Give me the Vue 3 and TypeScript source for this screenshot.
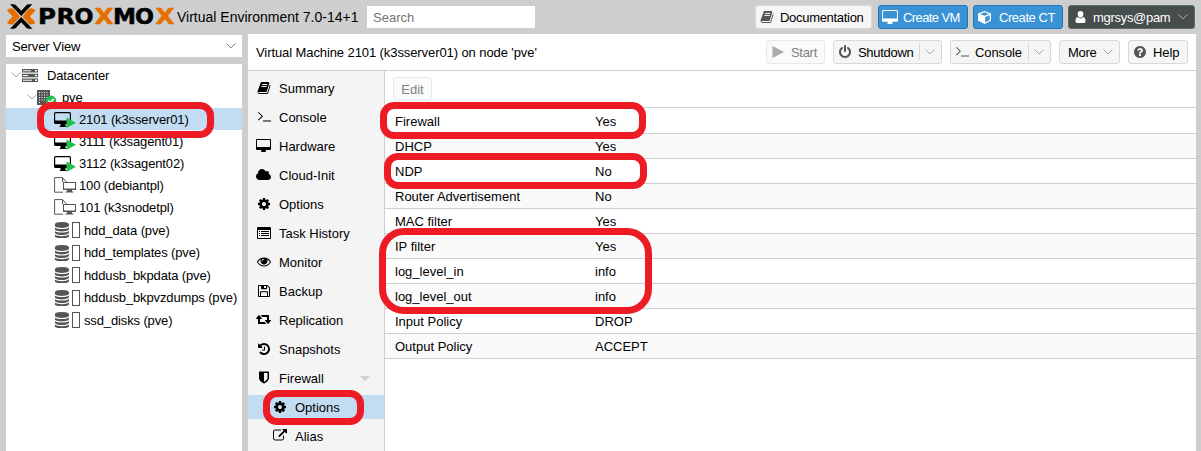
<script setup lang="ts">
interface IconDef { box: string; d: string }
interface TreeRow { label: string; kind: string; selected?: boolean }
interface NavItem { label: string; icon: string; sub?: boolean; selected?: boolean; arrow?: boolean }

const icons: Record<string, IconDef> = {
  desktop: { box: '0 0 1920 1792', d: 'M1792 992v-832q0-13-9.5-22.5t-22.5-9.5h-1600q-13 0-22.5 9.5t-9.5 22.5v832q0 13 9.5 22.5t22.5 9.5h1600q13 0 22.5-9.5t9.5-22.5zm128-832v1088q0 66-47 113t-113 47h-544q0 37 16 77.5t32 71 16 43.5q0 26-19 45t-45 19h-512q-26 0-45-19t-19-45q0-14 16-44t32-70 16-78h-544q-66 0-113-47t-47-113v-1088q0-66 47-113t113-47h1600q66 0 113 47t47 113z' },
  cog: { box: '0 0 1792 1792', d: 'M1152 896q0-106-75-181t-181-75-181 75-75 181 75 181 181 75 181-75 75-181zm512-109v222q0 12-8 23t-20 13l-185 28q-19 54-39 91 35 50 107 138 10 12 10 25t-9 23q-27 37-99 108t-94 71q-12 0-26-9l-138-108q-44 23-91 38-16 136-29 186-7 28-36 28h-222q-14 0-24.5-8.5t-11.5-21.5l-28-184q-49-16-90-37l-141 107q-10 9-25 9-14 0-25-11-126-114-165-168-7-10-7-23 0-12 8-23 15-21 51-66.5t54-70.5q-27-50-41-99l-183-27q-13-2-21-12.5t-8-23.5v-222q0-12 8-23t19-13l186-28q14-46 39-92-40-57-107-138-10-12-10-24 0-10 9-23 26-36 98.5-107.5t94.5-71.5q13 0 26 10l138 107q44-23 91-38 16-136 29-186 7-28 36-28h222q14 0 24.5 8.5t11.5 21.5l28 184q49 16 90 37l142-107q9-9 24-9 13 0 25 10 129 119 165 170 7 8 7 22 0 12-8 23-15 21-51 66.5t-54 70.5q26 50 41 98l183 28q13 2 21 12.5t8 23.5z' },
  database: { box: '128 0 1536 1792', d: 'M896 768q237 0 443-43t325-127v170q0 69-103 128t-280 93.5-385 34.5-385-34.5-280-93.5-103-128v-170q119 84 325 127t443 43zm0 768q237 0 443-43t325-127v170q0 69-103 128t-280 93.5-385 34.5-385-34.5-280-93.5-103-128v-170q119 84 325 127t443 43zm0-384q237 0 443-43t325-127v170q0 69-103 128t-280 93.5-385 34.5-385-34.5-280-93.5-103-128v-170q119 84 325 127t443 43zm0-1152q208 0 385 34.5t280 93.5 103 128v128q0 69-103 128t-280 93.5-385 34.5-385-34.5-280-93.5-103-128v-128q0-69 103-128t280-93.5 385-34.5z' },
  history: { box: '0 0 1792 1792', d: 'M1664 896q0 156-61 298t-164 245-245 164-298 61q-172 0-327-72.5t-264-204.5q-7-10-6.5-22.5t8.5-20.5l137-138q10-9 25-9 16 2 23 12 73 95 179 147t225 52q104 0 198.5-40.5t163.5-109.5 109.5-163.5 40.5-198.5-40.5-198.5-109.5-163.5-163.5-109.5-198.5-40.5q-98 0-188 35.5t-160 101.5l137 138q31 30 14 69-17 40-59 40h-448q-26 0-45-19t-19-45v-448q0-42 40-59 39-17 69 14l130 129q107-101 244.5-156.5t284.5-55.5q156 0 298 61t245 164 164 245 61 298zm-640-288v448q0 14-9 23t-23 9h-320q-14 0-23-9t-9-23v-64q0-14 9-23t23-9h224v-352q0-14 9-23t23-9h64q14 0 23 9t9 23z' },
  cloud: { box: '64 0 1920 1792', d: 'M1984 1152q0 159-112.5 271.5t-271.5 112.5h-1088q-185 0-316.5-131.5t-131.5-316.5q0-132 71-241.5t187-163.5q-2-28-2-43 0-212 150-362t362-150q158 0 286.5 88t187.5 230q70-62 166-62 106 0 181 75t75 181q0 75-41 138 129 30 213 134.5t84 239.5z' },
  power: { box: '128 0 1536 1792', d: 'M1664 896q0 156-61 298t-164 245-245 164-298 61-298-61-245-164-164-245-61-298q0-182 80.5-343t226.5-270q43-32 95.5-25t83.5 50q32 42 24.5 94.5t-49.5 84.5q-98 74-151.5 181t-53.5 228q0 104 40.5 198.5t109.5 163.5 163.5 109.5 198.5 40.5 198.5-40.5 163.5-109.5 109.5-163.5 40.5-198.5q0-121-53.5-228t-151.5-181q-42-32-49.5-84.5t24.5-94.5q31-43 84-50t95 25q146 109 226.5 270t80.5 343zm-640-768v640q0 52-38 90t-90 38-90-38-38-90v-640q0-52 38-90t90-38 90 38 38 90z' },
  help: { box: '128 0 1536 1792', d: 'M1024 1376v-192q0-14-9-23t-23-9h-192q-14 0-23 9t-9 23v192q0 14 9 23t23 9h192q14 0 23-9t9-23zm256-672q0-88-55.5-163t-138.5-116-170-41q-243 0-371 213-15 24 8 42l132 100q7 6 19 6 16 0 25-12 53-68 86-92 34-24 86-24 48 0 85.5 26t37.5 59q0 38-20 61t-68 45q-63 28-115.5 86.5t-52.5 125.5v36q0 14 9 23t23 9h192q14 0 23-9t9-23q0-19 21.5-49.5t54.5-49.5q32-18 49-28.5t46-35 44.5-48 28-60.5 12.5-81zm384 192q0 209-103 385.5t-279.5 279.5-385.5 103-385.5-103-279.5-279.5-103-385.5 103-385.5 279.5-279.5 385.5-103 385.5 103 279.5 279.5 103 385.5z' },
  eye: { box: '0 64 1792 1792', d: 'M1664 960q-152-236-381-353 61 104 61 225 0 185-131.5 316.5t-316.5 131.5-316.5-131.5-131.5-316.5q0-121 61-225-229 117-381 353 133 205 333.5 326.5t434.5 121.5 434.5-121.5 333.5-326.5zm-720-384q0-20-14-34t-34-14q-125 0-214.5 89.5t-89.5 214.5q0 20 14 34t34 14 34-14 14-34q0-86 61-147t147-61q20 0 34-14t14-34zm848 384q0 34-20 69-140 230-376.5 368.5t-499.5 138.5-499.5-139-376.5-368q-20-35-20-69t20-69q140-229 376.5-368t499.5-139 499.5 139 376.5 368q20 35 20 69z' },
  retweet: { box: '0 128 1920 1792', d: 'M1280 1504q0 13-9.5 22.5t-22.5 9.5h-960q-8 0-13.5-2t-9-7-5.5-8-3-11.5-1-11.5v-600h-192q-26 0-45-19t-19-45q0-24 15-41l320-384q19-22 49-22t49 22l320 384q15 17 15 41 0 26-19 45t-45 19h-192v384h576q16 0 25 11l160 192q7 10 7 21zm640-416q0 24-15 41l-320 384q-20 23-49 23t-49-23l-320-384q-15-17-15-41 0-26 19-45t45-19h192v-384h-576q-16 0-25-12l-160-192q-7-9-7-20 0-13 9.5-22.5t22.5-9.5h960q8 0 13.5 2t9 7 5.5 8 3 11.5 1 11.5v600h192q26 0 45 19t19 45z' },
  book: { box: '0 0 1792 1792', d: 'M1703 478q40 57 18 129l-275 906q-19 64-76.5 107.5t-122.5 43.5h-923q-77 0-148.5-53.5t-99.5-131.5q-24-67-2-127 0-4 3-27t4-37q1-8-3-21.5t-3-19.5q2-11 8-21t16.5-23.5 16.5-23.5q23-38 45-91.5t30-91.5q3-10 .5-30t-.5-28q3-11 17-28t17-23q21-36 42-92t25-90q1-9-2.500-32t.5-28q4-13 22-30.500t22-22.500q19-26 42.500-84.500t27.500-96.500q1-8-3-25.500t-2-26.500q2-8 9-18t18-23 17-21q8-12 16.500-30.500t15-35 16-36 19.500-32 26.500-23.500 36-11.500 47.500 5.500l-1 3q38-9 51-9h761q74 0 114 56t18 130l-274 906q-36 119-71.500 153.500t-128.500 34.500h-869q-27 0-38 15-11 16-1 43 24 70 144 70h923q29 0 56-15.500t35-41.500l300-987q7-22 5-57 38 15 59 43zm-1064 2q-4 13 2 22.500t20 9.500h608q13 0 25.500-9.500t16.500-22.500l21-64q4-13-2-22.500t-20-9.500h-608q-13 0-25.500 9.500t-16.500 22.500zm-83 256q-4 13 2 22.500t20 9.500h608q13 0 25.500-9.500t16.500-22.500l21-64q4-13-2-22.500t-20-9.500h-608q-13 0-25.500 9.500t-16.500 22.500z' },
  shield: { box: '0 64 1792 1792', d: 'M1344 960v-640h-448v1137q119-63 213-137 235-184 235-360zm192-768v768q0 86-33.5 170.5t-83 150-118 127.5-126.5 103-121 77.5-89.5 49.5-42.5 20q-12 6-26 6t-26-6q-16-7-42.5-20t-89.5-49.5-121-77.5-126.5-103-118-127.5-83-150-33.5-170.5v-768q0-26 19-45t45-19h1152q26 0 45 19t19 45z' },
  external: { box: '0 64 1792 1792', d: 'M1408 928v320q0 119-84.5 203.5t-203.5 84.5h-832q-119 0-203.5-84.5t-84.5-203.5v-832q0-119 84.5-203.5t203.5-84.5h704q14 0 23 9t9 23v64q0 14-9 23t-23 9h-704q-66 0-113 47t-47 113v832q0 66 47 113t113 47h832q66 0 113-47t47-113v-320q0-14 9-23t23-9h64q14 0 23 9t9 23zm384-864v512q0 26-19 45t-45 19-45-19l-176-176-652 652q-10 10-23 10t-23-10l-114-114q-10-10-10-23t10-23l652-652-176-176q-19-19-19-45t19-45 45-19h512q26 0 45 19t19 45z' },
  terminal: { box: '0 0 14 14', d: 'M1 2.6L1.7 1.9 6 6.2 1.7 10.5 1 9.8 4.6 6.2zM6 10.4h8v1.1H6z' },
  list: { box: '0 0 14 14', d: 'M1 1h12q1 0 1 1v10q0 1-1 1H1q-1 0-1-1V2q0-1 1-1zM1 4v8h12V4zM2 5h1v1H2zM4 5h8v1H4zM2 7h1v1H2zM4 7h8v1H4zM2 9h1v1H2zM4 9h8v1H4z' },
  floppy: { box: '0 0 14 14', d: 'M2 1h8.4L13 3.6V12q0 1-1 1H2q-1 0-1-1V2q0-1 1-1zM2 2v10h1V8q0-.8.8-.8h6.4q.8 0 .8.8v4h1V4l-2-2v2.5q0 .7-.8.7H4.8Q4 5.200 4 4.500V2zM7 2v2h2V2zM4 8.200V12h6V8.200z' },
  user: { box: '0 0 10 12', d: 'M5 0C6.800 0 7.900 1.300 7.900 3.100S6.800 6.700 5 6.700 2.100 4.900 2.100 3.100 3.200 0 5 0zM2.400 6Q3.500 7.400 5 7.400T7.600 6C9.400 6.200 10 8 10 10.300Q10 12 8.600 12H1.400Q0 12 0 10.300C0 8 .6 6.200 2.400 6z' },
  cube: { box: '0 0 13 13', d: 'M6.500 0L13 2.500V9.800L6.500 13 0 9.800V2.500zM6.500 1.300L2 3 6.500 4.700 11 3zM7.200 11.200L11.700 9V4.200L7.200 5.900z' },
  play: { box: '0 0 12 12', d: 'M.5 0L12 6 .5 12z' },
}

const tree: TreeRow[] = [
  { label: 'Datacenter', kind: 'dc' },
  { label: 'pve', kind: 'node' },
  { label: '2101 (k3sserver01)', kind: 'guest', selected: true },
  { label: '3111 (k3sagent01)', kind: 'guest' },
  { label: '3112 (k3sagent02)', kind: 'guest' },
  { label: '100 (debiantpl)', kind: 'tpl' },
  { label: '101 (k3snodetpl)', kind: 'tpl' },
  { label: 'hdd_data (pve)', kind: 'store' },
  { label: 'hdd_templates (pve)', kind: 'store' },
  { label: 'hddusb_bkpdata (pve)', kind: 'store' },
  { label: 'hddusb_bkpvzdumps (pve)', kind: 'store' },
  { label: 'ssd_disks (pve)', kind: 'store' },
]

const nav: NavItem[] = [
  { label: 'Summary', icon: 'book' },
  { label: 'Console', icon: 'terminal' },
  { label: 'Hardware', icon: 'desktop' },
  { label: 'Cloud-Init', icon: 'cloud' },
  { label: 'Options', icon: 'cog' },
  { label: 'Task History', icon: 'list' },
  { label: 'Monitor', icon: 'eye' },
  { label: 'Backup', icon: 'floppy' },
  { label: 'Replication', icon: 'retweet' },
  { label: 'Snapshots', icon: 'history' },
  { label: 'Firewall', icon: 'shield', arrow: true },
  { label: 'Options', icon: 'cog', sub: true, selected: true },
  { label: 'Alias', icon: 'external', sub: true },
]

const globalButtons = [
  { id: 'docs', label: 'Documentation', icon: 'book' },
  { id: 'vm', label: 'Create VM', icon: 'desktop' },
  { id: 'ct', label: 'Create CT', icon: 'cube' },
  { id: 'user', label: 'mgrsys@pam', icon: 'user', chevron: true },
]

const vmButtons = [
  { id: 'start', label: 'Start', icon: 'play' },
  { id: 'shutdown', label: 'Shutdown', icon: 'power', chevron: true, split: true },
  { id: 'console', label: 'Console', icon: 'terminal', chevron: true, split: true },
  { id: 'more', label: 'More', icon: '', chevron: true },
  { id: 'help', label: 'Help', icon: 'help' },
]

const options: [string, string][] = [
  ['Firewall', 'Yes'],
  ['DHCP', 'Yes'],
  ['NDP', 'No'],
  ['Router Advertisement', 'No'],
  ['MAC filter', 'Yes'],
  ['IP filter', 'Yes'],
  ['log_level_in', 'info'],
  ['log_level_out', 'info'],
  ['Input Policy', 'DROP'],
  ['Output Policy', 'ACCEPT'],
]
</script>

<template>
  <div class="app">
    <header class="top">
      <svg class="logo" width="170" height="30" viewBox="0 0 170 30">
        <path fill="#e57000" d="M0 9.500Q1.500 7.500 3.500 7.500H6L13 15.500 6 23.500H3.500Q1.500 23.500 0 21.500L5.500 15.500zM28.400 9.500Q26.900 7.500 24.900 7.500H22.400L15.400 15.500 22.400 23.500H24.900Q26.900 23.500 28.400 21.500L22.900 15.500z" />
        <path fill="#000" d="M3 3.300H6.500Q8 3.300 9 4.300L14.200 9.800 19.400 4.300Q20.400 3.300 21.900 3.300H25.400L14.200 15zM3 27.700H6.500Q8 27.700 9 26.700L14.200 21.200 19.400 26.700Q20.400 27.700 21.900 27.700H25.400L14.200 16z" />
        <g class="wordmark">
          <text x="31" y="23.300" textLength="18" lengthAdjust="spacingAndGlyphs">P</text>
          <text x="49.500" y="23.300" textLength="18.500" lengthAdjust="spacingAndGlyphs">R</text>
          <text x="67.500" y="23.300" textLength="19" lengthAdjust="spacingAndGlyphs">O</text>
          <text class="orange" x="87.500" y="23.300" textLength="19" lengthAdjust="spacingAndGlyphs">X</text>
          <text x="106" y="23.300" textLength="23" lengthAdjust="spacingAndGlyphs">M</text>
          <text x="128" y="23.300" textLength="19" lengthAdjust="spacingAndGlyphs">O</text>
          <text class="orange" x="148.500" y="23.300" textLength="19" lengthAdjust="spacingAndGlyphs">X</text>
        </g>
      </svg>
      <span class="version">Virtual Environment 7.0-14+1</span>
      <div class="search">Search</div>
      <div class="global-buttons">
        <div v-for="b in globalButtons" :key="b.id" class="btn" :class="b.id">
          <svg class="icon" :viewBox="icons[b.icon].box"><path fill-rule="evenodd" :d="icons[b.icon].d" /></svg>
          <span>{{ b.label }}</span>
          <svg v-if="b.chevron" class="chev" viewBox="0 0 10 6"><path d="M.5.5L5 5 9.500.5" /></svg>
        </div>
      </div>
    </header>

    <div class="body">
      <aside class="west">
        <div class="view-select">
          <span>Server View</span>
          <svg class="chev" viewBox="0 0 10 6"><path d="M.5.5L5 5 9.500.5" /></svg>
        </div>
        <div class="tree">
          <div v-for="row in tree" :key="row.label" class="row" :class="[row.kind, { selected: row.selected }]">
            <svg v-if="row.kind === 'dc' || row.kind === 'node'" class="chev" viewBox="0 0 10 6"><path d="M.5.5L5 5 9.500.5" /></svg>
            <svg v-if="row.kind === 'dc'" class="tree-icon" width="16" height="13" viewBox="0 0 16 13">
              <path fill="#555" fill-rule="evenodd" d="M0 0h16v3.500H0zM0 4.700h16v3.500H0zM0 9.400h16v3.500H0zM1 1.300v1h8v-1zM1 6v1h5V6zM1 10.700v1h9v-1zM13 1v1.500h2V1zM13 5.700v1.500h2V5.700zM13 10.400v1.500h2v-1.500z" />
            </svg>
            <svg v-else-if="row.kind === 'node'" class="tree-icon" width="20" height="16" viewBox="0 0 20 16">
              <path fill="#555" fill-rule="evenodd" d="M0 0h13v15H0zM2 2v1h1V2zM4.500 2v1h1V2zM7 2v1h1V2zM9.500 2v1h1V2zM2 4.500v1h1v-1zM4.500 4.500v1h1v-1zM7 4.500v1h1v-1zM9.500 4.500v1h1v-1zM2 7v1h1V7zM4.500 7v1h1V7zM7 7v1h1V7zM9.500 7v1h1V7zM2 9.500v1h1v-1zM4.500 9.500v1h1v-1zM7 9.500v1h1v-1zM2 12v1h1v-1z" />
              <circle cx="14" cy="10.700" r="5.200" fill="#21bf4b" />
              <path d="M11.300 10.500l2 2 3.400-3.600" fill="none" stroke="#fff" stroke-width="1.600" />
            </svg>
            <svg v-else-if="row.kind === 'guest'" class="tree-icon" width="22" height="16" viewBox="0 0 22 16">
              <path fill="#000" fill-rule="evenodd" d="M1.500 0h14q1.500 0 1.500 1.500v9q0 1.500-1.500 1.500H11.500v2q1 0 1 1H5.500q0-1 1-1v-2h-5Q0 12 0 10.500v-9Q0 0 1.500 0zM1.200 1.200v7.300h14.600V1.200z" />
              <path d="M12.500 5.500L22 10.700 12.500 16z" fill="#21bf4b" />
            </svg>
            <svg v-else-if="row.kind === 'tpl'" class="tree-icon" width="23" height="16" viewBox="0 0 23 16">
              <path d="M9 15.200H.6V.6H8.500L12.500 5M8.500.6V5" fill="none" stroke="#555" />
              <path fill="#555" fill-rule="evenodd" d="M9 5h13v8h-4v1.500h1.500v1h-8v-1H13V13H9zM10 6v5.500h11V6z" />
            </svg>
            <svg v-else class="tree-icon" width="27" height="16" viewBox="0 0 27 16">
              <svg x=".7" width="14.300" height="16.500" preserveAspectRatio="none" :viewBox="icons.database.box"><path fill="#555" :d="icons.database.d" /></svg>
              <rect x="18.500" y=".5" width="7" height="15" fill="none" stroke="#555" />
            </svg>
            <span>{{ row.label }}</span>
          </div>
        </div>
      </aside>

      <main class="center">
        <div class="title-bar">
          <span class="title">Virtual Machine 2101 (k3sserver01) on node 'pve'</span>
          <div class="vm-buttons">
            <div v-for="b in vmButtons" :key="b.id" class="btn" :class="b.id">
              <svg v-if="b.icon" class="icon" :viewBox="icons[b.icon].box"><path fill-rule="evenodd" :d="icons[b.icon].d" /></svg>
              <span>{{ b.label }}</span>
              <i v-if="b.split" class="divider" />
              <svg v-if="b.chevron" class="chev" viewBox="0 0 10 6"><path d="M.5.5L5 5 9.500.5" /></svg>
            </div>
          </div>
        </div>
        <div class="content">
          <nav class="menu">
            <div v-for="(n, i) in nav" :key="i" class="item" :class="{ sub: n.sub, selected: n.selected }">
              <svg class="icon" :class="n.icon" :viewBox="icons[n.icon].box"><path fill-rule="evenodd" :d="icons[n.icon].d" /></svg>
              <span>{{ n.label }}</span>
              <i v-if="n.arrow" class="caret" />
            </div>
          </nav>
          <section class="panel">
            <div class="toolbar"><div class="btn edit">Edit</div></div>
            <div class="grid">
              <div v-for="o in options" :key="o[0]" class="option"><span>{{ o[0] }}</span><span>{{ o[1] }}</span></div>
            </div>
          </section>
        </div>
      </main>
    </div>

    <div class="mark mark-tree" />
    <div class="mark mark-firewall" />
    <div class="mark mark-ndp" />
    <div class="mark mark-filter" />
    <div class="mark mark-options" />
  </div>
</template>

<style>
body { margin: 0; overflow: hidden; }
</style>

<style scoped>
.app { position: relative; width: 1201px; height: 451px; overflow: hidden; background: #cecece; color: #000; font: 13px/17px "Liberation Sans", Arial, sans-serif; display: flex; flex-direction: column; white-space: nowrap; }
svg { display: block; flex: none; }
.top { height: 34px; display: flex; align-items: flex-start; flex: none; }
.logo { margin: 1px 0 0 7px; }
.wordmark { font: bold 21px "DejaVu Sans", sans-serif; stroke: #000; stroke-width: .5; }
.orange { fill: #e57000; stroke: #e57000; }
.version { font-size: 14px; line-height: 18px; margin: 8px 0 0; width: 190px; }
.search { background: #fff; color: #757575; width: 162px; height: 22px; line-height: 23px; padding-left: 6px; margin-top: 6px; }
.global-buttons { margin: 5px 6px 0 auto; display: flex; gap: 5px; }
.btn { box-sizing: border-box; height: 24px; border: 1px solid #d8d8d8; border-radius: 3px; background: #f5f5f5; display: flex; align-items: center; }
.btn span { letter-spacing: -.3px; }
.icon { width: 14px; height: 14px; fill: currentColor; }
.btn .icon { color: #555; }
.chev { width: 10px; height: 6px; fill: none; stroke: #aaa; stroke-width: 1; }
.docs { width: 117px; padding-left: 4px; }
.docs span { margin-left: 6px; }
.vm { width: 90px; padding-left: 3px; margin-left: 1px; }
.vm .icon { width: 16px; height: 15px; }
.btn.vm span { margin-left: 5px; letter-spacing: -.6px; }
.ct { width: 90px; padding-left: 4px; }
.ct .icon { width: 13px; height: 13px; }
.ct span { margin-left: 8px; }
.btn.ct span { letter-spacing: -.45px; }
.vm, .ct { background: #3892d4; border-color: #2376b5; color: #fff; }
.global-buttons .vm .icon, .global-buttons .ct .icon, .global-buttons .user .icon { color: #fff; }
.user { width: 127px; padding-left: 6px; background: #464d4d; border-color: #5c6c68; color: #fff; }
.user .icon { width: 11px; height: 12px; }
.user span { margin-left: 7px; width: 85px; }
.body { flex: 1; display: flex; min-height: 0; }
.west { width: 236px; margin-left: 6px; display: flex; flex-direction: column; }
.view-select { height: 22px; margin-top: 1px; background: #fff; display: flex; align-items: center; justify-content: space-between; padding: 0 6px; letter-spacing: -.15px; }
.view-select .chev { stroke: #888; }
.tree { margin-top: 7px; background: #fff; flex: 1; letter-spacing: -.13px; }
.row { height: 22px; display: flex; align-items: center; box-sizing: border-box; }
.row.dc { padding-left: 5px; }
.row.dc .tree-icon { margin: 0 9px 0 1px; }
.row.node { padding-left: 21px; }
.row.node .tree-icon { margin: 2px 5px 0 0; }
.row.guest, .row.tpl, .row.store { padding-left: 48px; }
.row.guest .tree-icon { margin-top: 2px; }
.row.guest span { margin-left: 3px; }
.row.tpl span { margin-left: 2px; }
.row.store { height: 22.500px; }
.row.tpl + .row.store { margin-top: 1px; }
.row.store span { margin-left: 3px; }
.row.selected { background: #c2ddf2; }
.center { width: 948px; margin-left: 6px; background: #fff; display: flex; flex-direction: column; }
.title-bar { height: 36px; border-bottom: 1px solid #cfcfcf; display: flex; align-items: center; }
.title { margin-left: 8px; letter-spacing: -.09px; }
.vm-buttons { margin-left: auto; margin-right: 8px; display: flex; gap: 8px; }
.start { width: 59px; padding-left: 5px; border-color: #e8e8e8; background: #fafafa; color: #808080; }
.btn.start .icon { width: 12px; height: 12px; color: #aaa; }
.start span { margin-left: 7px; }
.shutdown { width: 109px; padding-left: 5px; }
.shutdown .icon { width: 12px; height: 14px; }
.shutdown span { margin-left: 7px; width: 61px; }
.console { width: 101px; padding-left: 4px; }
.btn.console span { margin-left: 6px; width: 53px; letter-spacing: -.1px; }
.divider { width: 1px; height: 16px; background: #d8d8d8; margin-right: 5px; }
.more { width: 61px; padding-left: 8px; }
.more span { width: 35px; }
.help { width: 60px; padding-left: 5px; }
.help .icon { width: 12px; height: 14px; }
.btn.help span { margin-left: 7px; letter-spacing: -.1px; }
.content { flex: 1; display: flex; min-height: 0; }
.menu { width: 136px; flex: none; border-right: 1px solid #cfcfcf; background: #f4f4f4; padding-top: 5px; overflow: hidden; }
.item { height: 24px; margin-bottom: 5px; display: flex; align-items: center; padding-left: 9px; }
.item span { width: 81px; margin-left: 8px; }
.item .desktop, .item .cloud, .item .retweet { width: 15px; margin-right: 0; margin-left: -1px; }
.item.sub { padding-left: 25px; }
.item.selected { background: #c2ddf2; }
.caret { border: 5px solid transparent; border-top-color: #cfcfcf; border-bottom: 0; }
.panel { flex: 1; }
.toolbar { height: 36px; padding: 6px 0 0 8px; box-sizing: border-box; }
.edit { width: 39px; justify-content: center; color: #808080; border-color: #e8e8e8; background: #fafafa; }
.grid { border-top: 1px solid #cfcfcf; }
.option { height: 24px; border-bottom: 1px solid #cfcfcf; display: grid; grid-template-columns: 200px 1fr; align-items: center; padding-left: 10px; }
.option:first-child { height: 24px; padding-top: 1px; }
.option:nth-child(even) { background: #fafafa; }
.mark { position: absolute; box-sizing: border-box; border: 7px solid #ed1c24; border-radius: 14px; }
.mark-tree { left: 37px; top: 102px; width: 177px; height: 36px; }
.mark-firewall { left: 380px; top: 102px; width: 266px; height: 37px; }
.mark-ndp { left: 384px; top: 153px; width: 263px; height: 36px; }
.mark-filter { left: 379px; top: 228px; width: 273px; height: 86px; border-radius: 25px; }
.mark-options { left: 263px; top: 390px; width: 101px; height: 35px; }
</style>
